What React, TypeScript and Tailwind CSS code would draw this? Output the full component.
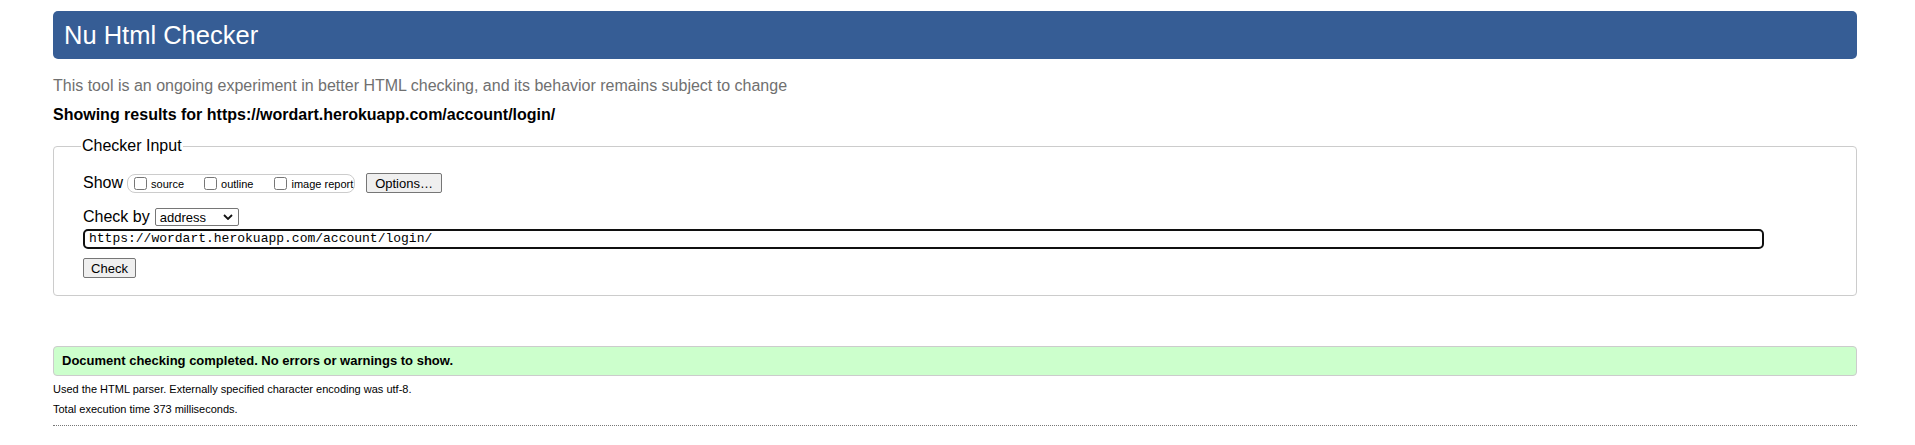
import React from "react";

function Checkbox({ label }: { label: string }) {
  return (
    <label className="flex items-center">
      <input type="checkbox" className="m-0 h-[13px] w-[13px]" />
      <span className="ml-[4px] mt-[3px] text-[11px] leading-[13px]">{label}</span>
    </label>
  );
}

export default function App() {
  return (
    <div className="min-h-[445px] bg-white pl-[53px] pr-[58px] pt-[11px] font-['Liberation_Sans',Arial,sans-serif] text-black">
      <h1 className="h-[48px] rounded-[5px] bg-[#365d95] pl-[11px] text-[25.5px] leading-[48px] text-white">
        Nu Html Checker
      </h1>
      <p className="mt-[18px] text-[16px] leading-[18px] text-[#707070]">
        This tool is an ongoing experiment in better HTML checking, and its behavior remains subject to change
      </p>
      <p className="mt-[11px] text-[16px] font-bold leading-[18px]">
        Showing results for https://wordart.herokuapp.com/account/login/
      </p>
      <fieldset className="mt-[13px] rounded-[4px] border border-[#cccccc] pb-[17px] pl-[29px]">
        <legend className="-ml-[2px] px-[1px] text-[16px] leading-[18px]">Checker Input</legend>
        <div className="mt-[18px] flex h-[20px] items-center">
          <span className="text-[16px] leading-[18px]">Show</span>
          <div className="ml-[4px] flex h-[19px] w-[228px] items-center rounded-[8px] border border-[#cccccc] pl-[6px]">
            <Checkbox label="source" />
            <div className="w-[20px]" />
            <Checkbox label="outline" />
            <div className="w-[21px]" />
            <Checkbox label="image report" />
          </div>
          <button className="ml-[11px] flex h-[20px] w-[76px] items-center justify-center rounded-[2px] border border-[#767676] bg-[#efefef] text-[13px] leading-[15px]">
            Options…
          </button>
        </div>
        <div className="mt-[15px] flex h-[18px] items-center">
          <span className="text-[16px] leading-[18px]">Check by</span>
          <div className="ml-[5px] flex h-[18px] w-[84px] items-center justify-between rounded-[2px] border border-[#767676] bg-white pl-[4px] pr-[4px] text-[13px] leading-[15px]">
            <span>address</span>
            <svg width="10" height="6" viewBox="0 0 10 6" className="mr-[1px]">
              <path d="M1 1 L5 5 L9 1" fill="none" stroke="#111" strokeWidth="1.8" />
            </svg>
          </div>
        </div>
        <div className="mt-[3px] mr-[92px] h-[20px] rounded-[5px] border-2 border-[#101010] pl-[4px] font-['Liberation_Mono',monospace] text-[13px] leading-[16px]">
          https://wordart.herokuapp.com/account/login/
        </div>
        <button className="mt-[9px] flex h-[20px] w-[53px] items-center justify-center rounded-[2px] border border-[#767676] bg-[#efefef] text-[13px] leading-[15px]">
          Check
        </button>
      </fieldset>
      <div className="mt-[50px] h-[30px] rounded-[4px] border border-[#cccccc] bg-[#ccffcc] pl-[8px] text-[13px] font-bold leading-[28px]">
        Document checking completed. No errors or warnings to show.
      </div>
      <p className="mt-[7px] text-[11px] leading-[13px]">
        Used the HTML parser. Externally specified character encoding was utf-8.
      </p>
      <p className="mt-[7px] text-[11px] leading-[13px]">Total execution time 373 milliseconds.</p>
      <div className="mt-[9px] border-b border-dotted border-[#777777]" />
    </div>
  );
}
